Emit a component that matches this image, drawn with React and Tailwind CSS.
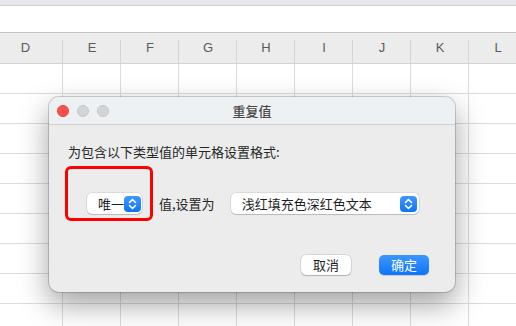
import React from 'react';

const cols = ['D', 'E', 'F', 'G', 'H', 'I', 'J', 'K', 'L'];
const rows = [0, 1, 2, 3, 4, 5, 6, 7, 8];

const font = { fontFamily: '"Noto Sans CJK SC", "Liberation Sans", sans-serif' };

// up/down chevrons inside the blue stepper
const Stepper = () => (
    <span className='flex items-center justify-center w-[17px] h-[16px] rounded-[4px] bg-gradient-to-b from-[#3d98ff] to-[#0a74f4]'>
        <svg width="9" height="12" viewBox="0 0 9 12" fill="none" stroke="white" strokeWidth="1.6" strokeLinecap="round" strokeLinejoin="round">
            <path d="M1.5 4.5 L4.5 1.5 L7.5 4.5" />
            <path d="M1.5 7.5 L4.5 10.5 L7.5 7.5" />
        </svg>
    </span>
);

const App = () => {
    return (
        <div className='relative w-[516px] h-[326px] overflow-hidden bg-white' style={font}>
            {/* toolbar bottom edge */}
            <div className='h-[6px] bg-[#e8e8ec] border-b border-[#cfcfcf]'></div>
            <div className='h-[27px] bg-white border-b border-[#c4c4c4]'></div>

            {/* column header */}
            <div className='flex h-[31px] bg-[#ececec] border-b border-[#d4d4d4]'>
                {cols.map((c, i) => (
                    <div key={c} className={`relative shrink-0 flex items-center justify-center text-[13px] text-[#5a5a5a] ${i === 0 ? 'w-[63px] pr-3' : 'w-[58px]'}`} style={{ fontFamily: '"Liberation Sans", sans-serif' }}>
                        {c}
                        <span className='absolute right-0 bottom-0 h-[23px] w-px bg-[#d4d4d4]'></span>
                    </div>
                ))}
            </div>

            {/* cells */}
            {rows.map(r => (
                <div key={r} className='flex h-[30px] border-b border-[#dcdcdc]'>
                    {cols.map((c, i) => (
                        <div key={c} className={`shrink-0 border-r border-[#dcdcdc] ${i === 0 ? 'w-[63px]' : 'w-[58px]'}`}></div>
                    ))}
                </div>
            ))}

            {/* dialog */}
            <div className='absolute left-[49px] top-[97px] w-[406px] h-[195px] rounded-[10px] overflow-hidden bg-[#ececec] ring-1 ring-[#0000002a] shadow-[0_12px_30px_rgba(0,0,0,0.38)]'>
                <div className='flex items-center h-[28px] bg-[#eef1f4] border-b border-[#cfcfcf]'>
                    <div className='flex items-center gap-2 pl-2'>
                        <span className='w-3 h-3 rounded-full bg-[#fe4f4c] border border-[#e0443e]'></span>
                        <span className='w-3 h-3 rounded-full bg-[#d3d4d6] border border-[#c3c4c6]'></span>
                        <span className='w-3 h-3 rounded-full bg-[#d3d4d6] border border-[#c3c4c6]'></span>
                    </div>
                    <div className='flex-1 pr-[60px] text-center text-[13px] font-medium text-[#4a4a4a]'>重复值</div>
                </div>

                <div className='relative'>
                    <p className='pt-[19px] pl-[19px] text-[13px] leading-4 text-[#262626]'>为包含以下类型值的单元格设置格式:</p>

                    <div className='flex items-center mt-[33px] pl-[38px]'>
                        <div className='flex items-center justify-between w-[55px] h-[21px] pl-[11px] pr-[1px] bg-white rounded-[5px] shadow-[0_0_0_0.5px_rgba(0,0,0,0.15),0_1px_1px_rgba(0,0,0,0.15)] text-[13px] text-[#1f1f1f]'>
                            唯一
                            <Stepper />
                        </div>
                        <span className='ml-[17px] text-[13px] text-[#262626]'>值,设置为</span>
                        <div className='flex items-center justify-between ml-[16px] w-[188px] h-[21px] pl-[11px] pr-[2px] bg-white rounded-[5px] shadow-[0_0_0_0.5px_rgba(0,0,0,0.15),0_1px_1px_rgba(0,0,0,0.15)] text-[13px] text-[#1f1f1f]'>
                            浅红填充色深红色文本
                            <Stepper />
                        </div>
                    </div>

                    <div className='flex justify-end gap-[28px] mt-[41px] pr-[26px]'>
                        <button className='w-[50px] h-[20px] rounded-[5px] bg-white text-[13px] text-[#1f1f1f] shadow-[0_0_0_0.5px_rgba(0,0,0,0.18),0_1px_1px_rgba(0,0,0,0.18)]'>取消</button>
                        <button className='w-[50px] h-[20px] rounded-[5px] bg-gradient-to-b from-[#3b96ff] to-[#0b74f5] text-[13px] text-white shadow-[0_1px_1px_rgba(0,0,0,0.15)]'>确定</button>
                    </div>

                    {/* red annotation box */}
                    <div className='absolute left-[16px] top-[41px] w-[88px] h-[55px] border-[3px] border-[#ff0000] rounded-[6px]'></div>
                </div>
            </div>
        </div>
    );
};

export default App;
